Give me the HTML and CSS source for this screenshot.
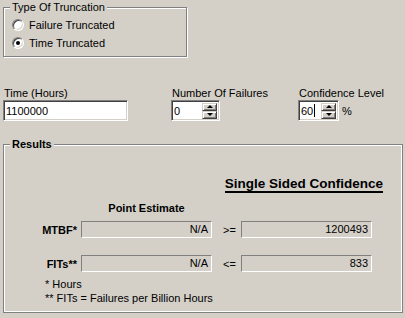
FILE: index.html
```html
<!DOCTYPE html>
<html lang="en">
<head>
    <meta charset="UTF-8">
    <title>MTBF Calculator</title>
    <link rel="stylesheet" href="styles.css">
</head>
<body>

    <div class="group trunc">
        <span class="legend">Type Of Truncation</span>
        <label class="opt"><span class="radio"></span>Failure Truncated</label>
        <label class="opt"><span class="radio on"></span>Time Truncated</label>
    </div>

    <div class="inputs">
        <div class="field f-time">
            <div class="lbl">Time (Hours)</div>
            <div class="edit"><span class="val">1100000</span></div>
        </div>
        <div class="field f-fail">
            <div class="lbl">Number Of Failures</div>
            <div class="edit">
                <span class="val">0</span>
                <div class="spin"><span class="btn up"></span><span class="btn down"></span></div>
            </div>
        </div>
        <div class="field f-conf">
            <div class="lbl">Confidence Level</div>
            <div class="spinbox">
                <div class="edit">
                    <span class="val">60<span class="caret"></span></span>
                    <div class="spin"><span class="btn up"></span><span class="btn down"></span></div>
                </div>
                <span>%</span>
            </div>
        </div>
    </div>

    <div class="group results">
        <span class="legend bold">Results</span>

        <div class="title-row">
            <div class="title">Single Sided Confidence</div>
        </div>

        <div class="pe">Point Estimate</div>

        <div class="row">
            <span class="rlbl">MTBF*</span>
            <div class="out">N/A</div>
            <span class="op">&gt;=</span>
            <div class="out">1200493</div>
        </div>
        <div class="row row2">
            <span class="rlbl">FITs**</span>
            <div class="out">N/A</div>
            <span class="op">&lt;=</span>
            <div class="out">833</div>
        </div>

        <div class="notes">
            <div>* Hours</div>
            <div>** FITs = Failures per Billion Hours</div>
        </div>
    </div>

</body>
</html>
```

FILE: styles.css
```css
body {
    margin: 0;
    padding: 7px 0 0 3px;
    background: #d4d0c8;
    font: 11px "Liberation Sans", Arial, sans-serif;
    color: #000;
}
.bold {
    font-weight: bold;
}

/* etched group boxes */
.group {
    position: relative;
    box-sizing: border-box;
    border: 1px solid #808080;
    box-shadow: inset 1px 1px #fff, 1px 1px #fff;
}
.legend {
    position: absolute;
    top: -7px;
    left: 6px;
    padding: 0 2px;
    background: #d4d0c8;
    line-height: 13px;
}

.trunc {
    width: 184px;
    height: 50px;
    padding: 11px 0 0 8px;
    display: flex;
    flex-direction: column;
    gap: 6px;
}
.opt {
    display: flex;
    align-items: center;
    gap: 5px;
    height: 12px;
    line-height: 12px;
}
.radio {
    position: relative;
    width: 12px;
    height: 12px;
    box-sizing: border-box;
    border-radius: 50%;
    background: #fff;
    border: 1px solid;
    border-color: #808080 #fff #fff #808080;
    box-shadow: inset 1px 1px #404040, inset -1px -1px #d4d0c8;
}
.radio.on::after {
    content: "";
    position: absolute;
    left: 3px;
    top: 3px;
    width: 4px;
    height: 4px;
    border-radius: 50%;
    background: #000;
}

/* input row */
.inputs {
    display: flex;
    margin-top: 29px;
}
.lbl {
    line-height: 14px;
    padding-left: 1px;
}
.f-time {
    width: 168px;
}
.f-fail {
    width: 127px;
}
.edit {
    height: 21px;
    box-sizing: border-box;
    display: flex;
    align-items: center;
    padding-left: 2px;
    background: #fff;
    border: 1px solid;
    border-color: #808080 #fff #fff #808080;
    box-shadow: inset 1px 1px #404040, inset -1px -1px #d4d0c8;
}
.f-time .edit {
    width: 125px;
}
.f-fail .edit {
    width: 49px;
}
.f-conf .edit {
    width: 41px;
}
.val {
    flex: 1;
    display: flex;
    align-items: center;
}
.caret {
    width: 1px;
    height: 13px;
    margin-left: 1px;
    background: #000;
}
.spinbox {
    display: flex;
    align-items: center;
    gap: 3px;
}
.spin {
    display: flex;
    flex-direction: column;
    margin-right: 2px;
}
.btn {
    width: 15px;
    height: 8px;
    box-sizing: border-box;
    display: flex;
    align-items: center;
    justify-content: center;
    background: #d4d0c8;
    border: 1px solid;
    border-color: #d4d0c8 #404040 #404040 #d4d0c8;
    box-shadow: inset 1px 1px #fff, inset -1px -1px #808080;
}
.btn::before {
    content: "";
    border-left: 3px solid transparent;
    border-right: 3px solid transparent;
}
.up::before {
    border-bottom: 3px solid #000;
}
.down::before {
    border-top: 3px solid #000;
}

/* results */
.results {
    width: 400px;
    height: 169px;
    margin-top: 23px;
    box-shadow: inset 0 0 0 1px #fff;
}
.title-row {
    display: flex;
    justify-content: flex-end;
    padding-right: 19px;
    margin-top: 31px;
}
.title {
    font-size: 13.5px;
    font-weight: bold;
    line-height: 15px;
    border-bottom: 2px solid #000;
}
.pe {
    width: 131px;
    margin: 9px 0 0 77px;
    text-align: center;
    font-weight: bold;
    line-height: 13px;
}
.row {
    display: flex;
    align-items: center;
    margin-top: 6px;
}
.row2 {
    margin-top: 17px;
}
.rlbl {
    width: 73px;
    margin-right: 4px;
    text-align: right;
    font-weight: bold;
}
.out {
    width: 131px;
    height: 17px;
    box-sizing: border-box;
    padding-right: 3px;
    line-height: 15px;
    text-align: right;
    border: 1px solid;
    border-color: #808080 #fff #fff #808080;
}
.op {
    width: 29px;
    padding-left: 11px;
    box-sizing: border-box;
}
.notes {
    margin-top: 5px;
    padding-left: 41px;
    line-height: 14px;
}
```
